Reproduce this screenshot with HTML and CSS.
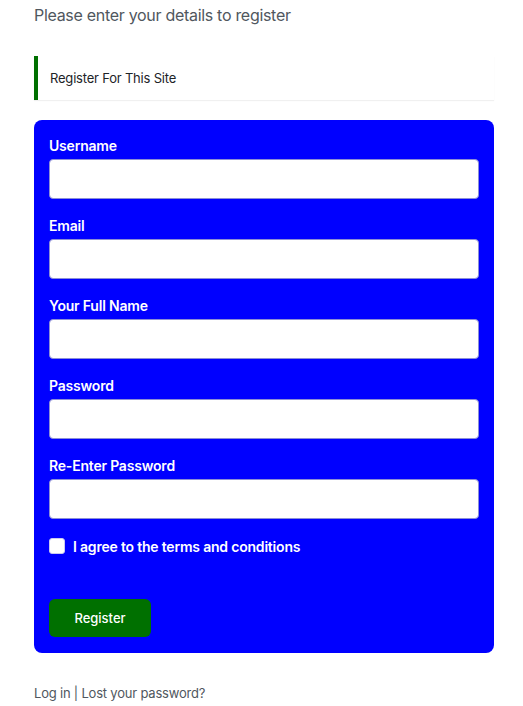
FILE: index.html
```html
<!DOCTYPE html>
<html lang="en">
<head>
  <meta charset="UTF-8" />
  <title>Register</title>
  <link rel="stylesheet" href="styles.css">
</head>
<body>
  <div class="page">
    <p class="intro">Please enter your details to register</p>

    <div class="notice">Register For This Site</div>

    <form class="register-form" onsubmit="return false">
      <label for="username">Username</label>
      <input type="text" id="username" />

      <label for="email">Email</label>
      <input type="email" id="email" />

      <label for="fullname">Your Full Name</label>
      <input type="text" id="fullname" />

      <label for="password">Password</label>
      <input type="password" id="password" />

      <label for="password2">Re-Enter Password</label>
      <input type="password" id="password2" />

      <div class="terms">
        <input type="checkbox" id="terms" />
        <label for="terms">I agree to the terms and conditions</label>
      </div>

      <button type="submit" class="register-btn">Register</button>
    </form>

    <p class="links">Log in | Lost your password?</p>
  </div>
</body>
</html>
```

FILE: styles.css
```css
:root {
  --blue: #0000ff;
  --green: #007000;
  --muted: #50575e;
  --dark: #1d2327;
}

body {
  margin: 0;
  font-family: Inter, 'Liberation Sans', sans-serif;
  letter-spacing: -0.2px;
  background-color: white;
}

.page {
  width: 460px;
  padding: 3px 0 0 34px;
}

.intro {
  margin: 0;
  font-size: 16px;
  line-height: 24px;
  letter-spacing: -0.3px;
  color: var(--muted);
}

.notice {
  margin-top: 29px;
  padding: 0 12px;
  height: 44px;
  display: flex;
  align-items: center;
  font-size: 13px;
  color: var(--dark);
  border-left: 4px solid var(--green);
  box-shadow: 0 1px 1px rgba(0, 0, 0, 0.06);
}

.register-form {
  margin-top: 20px;
  background-color: var(--blue);
  border-radius: 8px;
  padding: 16px 15px 16px 15px;
  display: flex;
  flex-direction: column;
}

.register-form > label {
  font-size: 14px;
  line-height: 20px;
  font-weight: 600;
  color: white;
  margin-bottom: 3px;
}

.register-form > input {
  height: 40px;
  box-sizing: border-box;
  border: 1px solid #8c8fd6;
  border-radius: 4px;
  background: white;
  margin: 0 0 17px 0;
  padding: 0 8px;
  font-size: 14px;
}

.terms {
  display: flex;
  align-items: center;
  gap: 8px;
  height: 20px;
}

.terms input {
  appearance: none;
  margin: 0;
  width: 16px;
  height: 16px;
  border-radius: 3px;
  background: white;
  border: 1px solid #c9c9f0;
}

.terms label {
  font-size: 14px;
  font-weight: 600;
  color: white;
}

.register-btn {
  align-self: flex-start;
  margin-top: 43px;
  width: 102px;
  height: 38px;
  border: none;
  border-radius: 6px;
  background-color: var(--green);
  color: white;
  font-family: inherit;
  font-size: 13px;
  font-weight: 500;
}

.links {
  margin: 31px 0 0 0;
  font-size: 13px;
  line-height: 18px;
  color: var(--muted);
}
```
